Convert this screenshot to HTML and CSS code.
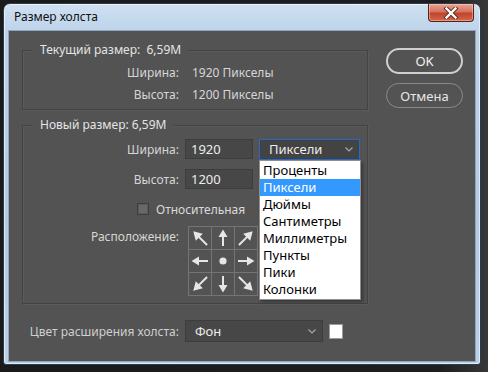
FILE: index.html
```html
<!DOCTYPE html>
<html lang="ru">
<head>
<meta charset="utf-8">
<title>Размер холста</title>
<link rel="stylesheet" href="styles.css">
</head>
<body>
<div class="window">
  <div class="titlebar">
    <span class="title">Размер холста</span>
    <div class="close">
      <svg width="16" height="12" viewBox="0 0 16 12">
        <path d="M3.5 1.5 L12.5 10.5 M12.5 1.5 L3.5 10.5" stroke="#5a2a22" stroke-width="4.2" stroke-linecap="square" fill="none"/>
        <path d="M3.5 1.5 L12.5 10.5 M12.5 1.5 L3.5 10.5" stroke="#ffffff" stroke-width="2.4" stroke-linecap="square" fill="none"/>
      </svg>
    </div>
  </div>
  <div class="client">
    <div class="main">
      <div class="left">
        <section class="group g1">
          <div class="legend">Текущий размер:&nbsp; 6,59M</div>
          <div class="row info first"><span class="lbl">Ширина:</span><span class="val">1920 Пикселы</span></div>
          <div class="row info"><span class="lbl">Высота:</span><span class="val">1200 Пикселы</span></div>
        </section>
        <section class="group g2">
          <div class="legend">Новый размер: 6,59M</div>
          <div class="row field first">
            <span class="lbl">Ширина:</span>
            <div class="input">1920</div>
            <div class="select unit focus">
              <span>Пиксели</span>
              <svg class="chev" width="8" height="5" viewBox="0 0 8 5"><path d="M0.5 0.5 L4 4 L7.5 0.5" stroke="#a8a8a8" stroke-width="1.2" fill="none"/></svg>
              <ul class="menu">
                <li>Проценты</li>
                <li class="sel">Пиксели</li>
                <li>Дюймы</li>
                <li>Сантиметры</li>
                <li>Миллиметры</li>
                <li>Пункты</li>
                <li>Пики</li>
                <li>Колонки</li>
              </ul>
            </div>
          </div>
          <div class="row field">
            <span class="lbl">Высота:</span>
            <div class="input">1200</div>
          </div>
          <div class="row check"><span class="box"></span><span class="ctext">Относительная</span></div>
          <div class="row anchor">
            <span class="lbl">Расположение:</span>
            <div class="grid">
              <div class="cell"><svg class="arrow r-315" viewBox="0 0 22 22"><path d="M11 21 V8" /><polygon points="11,1.5 6,10 16,10"/></svg></div>
              <div class="cell"><svg class="arrow" viewBox="0 0 22 22"><path d="M11 19 V8" /><polygon points="11,2.5 6.5,10 15.5,10"/></svg></div>
              <div class="cell"><svg class="arrow r-45" viewBox="0 0 22 22"><path d="M11 21 V8" /><polygon points="11,1.5 6,10 16,10"/></svg></div>
              <div class="cell"><svg class="arrow r-270" viewBox="0 0 22 22"><path d="M11 19 V8" /><polygon points="11,2.5 6.5,10 15.5,10"/></svg></div>
              <div class="cell"><svg class="dot" viewBox="0 0 22 22"><circle cx="11" cy="11" r="3.6"/></svg></div>
              <div class="cell"><svg class="arrow r-90" viewBox="0 0 22 22"><path d="M11 19 V8" /><polygon points="11,2.5 6.5,10 15.5,10"/></svg></div>
              <div class="cell"><svg class="arrow r-225" viewBox="0 0 22 22"><path d="M11 21 V8" /><polygon points="11,1.5 6,10 16,10"/></svg></div>
              <div class="cell"><svg class="arrow r-180" viewBox="0 0 22 22"><path d="M11 19 V8" /><polygon points="11,2.5 6.5,10 15.5,10"/></svg></div>
              <div class="cell"><svg class="arrow r-135" viewBox="0 0 22 22"><path d="M11 21 V8" /><polygon points="11,1.5 6,10 16,10"/></svg></div>
            </div>
          </div>
        </section>
      </div>
      <div class="buttons">
        <div class="btn ok">OK</div>
        <div class="btn cancel">Отмена</div>
      </div>
    </div>
    <div class="bottom">
      <span class="lbl">Цвет расширения холста:</span>
      <div class="select fill">
        <span>Фон</span>
        <svg class="chev" width="8" height="5" viewBox="0 0 8 5"><path d="M0.5 0.5 L4 4 L7.5 0.5" stroke="#a8a8a8" stroke-width="1.2" fill="none"/></svg>
      </div>
      <div class="swatch"></div>
    </div>
  </div>
</div>
</body>
</html>
```

FILE: styles.css
```css
* { box-sizing: border-box; }

body {
  margin: 0;
  width: 488px;
  height: 372px;
  overflow: hidden;
  background: linear-gradient(90deg, #1a1a1a 0%, #1e1e1e 90%, #383838 100%);
  font-family: "Noto Sans", "Open Sans", sans-serif;
}

.window {
  margin: 3px 0 0 3px;
  width: 478px;
  height: 362px;
  border: 1px solid #2d3c4c;
  border-radius: 7px 7px 3px 3px;
  background: linear-gradient(180deg, #cfe0f1 0%, #bcd3ea 8%, #b3cbe4 60%, #b9d0e8 100%);
  box-shadow: inset 0 0 0 1px rgba(255, 255, 255, 0.55);
  padding: 0 5px 3px 5px;
  display: flex;
  flex-direction: column;
}

.titlebar {
  height: 27px;
  display: flex;
  justify-content: space-between;
  align-items: flex-start;
}

.title {
  padding: 5px 0 0 5px;
  font-family: "Noto Sans", sans-serif;
  font-size: 12px;
  line-height: 16px;
  color: #101010;
}

.close {
  margin: 0 1px 0 0;
  width: 46px;
  height: 18px;
  border: 1px solid #5b2018;
  border-top: none;
  border-radius: 0 0 4px 4px;
  background: linear-gradient(180deg, #e9a596 0%, #d4735f 45%, #c1432c 55%, #cf6a4f 100%);
  box-shadow: inset 0 0 0 1px rgba(255, 220, 210, 0.45);
  display: flex;
  align-items: center;
  justify-content: center;
}

.client {
  flex: 1;
  background: #535353;
  box-shadow: 0 0 0 1px #8fa7c0;
  padding: 19px 12px 0 13px;
  display: flex;
  flex-direction: column;
  color: #dadada;
  font-size: 12px;
}

.main {
  display: flex;
}

.left {
  width: 346px;
  display: flex;
  flex-direction: column;
}

.group {
  border: 1px solid #434343;
  box-shadow: 1px 1px 0 #5b5b5b, inset 1px 1px 0 #5b5b5b;
  display: flex;
  flex-direction: column;
}

.legend {
  align-self: flex-start;
  margin: -9px 0 0 10px;
  padding: 0 7px;
  background: #535353;
  line-height: 16px;
  color: #e4e4e4;
  font-size: 12px;
}

.row {
  display: flex;
  align-items: center;
}

.lbl {
  width: 156px;
  flex: none;
  text-align: right;
  color: #d6d6d6;
}

.g1 { padding-bottom: 4px; }
.g1 .row.first { margin-top: 3px; }
.info { height: 22px; }
.val { margin-left: 13px; color: #d6d6d6; }

.g2 { margin-top: 15px; padding-bottom: 7px; }
.g2 .row.first { margin-top: 6px; }
.field { height: 20px; margin-bottom: 10px; }

.input {
  margin-left: 6px;
  width: 68px;
  height: 20px;
  background: #474747;
  border: 1px solid #3d3d3d;
  padding-left: 5px;
  line-height: 18px;
  font-size: 13px;
  color: #ececec;
}

.select {
  position: relative;
  height: 21px;
  background: #474747;
  border: 1px solid #3d3d3d;
  display: flex;
  align-items: center;
  justify-content: space-between;
  padding: 0 6px 0 9px;
  font-size: 13px;
  color: #ececec;
}

.unit {
  margin-left: 6px;
  width: 101px;
}

.focus {
  border-color: #2f68b5;
  background: #434343;
  box-shadow: inset 0 0 0 1px #33435a;
}

.menu {
  position: absolute;
  top: 20px;
  left: -1px;
  width: 102px;
  margin: 0;
  padding: 1px 0;
  list-style: none;
  background: #ffffff;
  border: 1px solid #8e8e8e;
  box-shadow: 2px 2px 3px rgba(0, 0, 0, 0.35);
  z-index: 2;
}

.menu li {
  height: 17px;
  line-height: 17px;
  padding-left: 3px;
  font-size: 13px;
  color: #000;
}

.menu li.sel {
  background: #3399ff;
  color: #fff;
}

.check {
  height: 20px;
  padding-left: 114px;
}

.box {
  width: 12px;
  height: 12px;
  border: 1px solid #3e3e3e;
  background: #686868;
  box-shadow: inset 0 0 0 1px #5a5a5a;
}

.ctext {
  margin-left: 7px;
  color: #dadada;
}

.anchor {
  margin-top: 7px;
  align-items: flex-start;
}

.anchor .lbl {
  margin-top: 2px;
}

.grid {
  margin-left: 9px;
  width: 70px;
  height: 70px;
  padding: 1px;
  background: #747474;
  display: grid;
  grid-template-columns: repeat(3, 22px);
  grid-template-rows: repeat(3, 22px);
  gap: 1px;
}

.cell {
  background: #535353;
}

.cell svg {
  display: block;
  width: 22px;
  height: 22px;
}

.arrow path {
  stroke: #e6e6e6;
  stroke-width: 2;
  fill: none;
}

.arrow polygon,
.dot circle {
  fill: #e6e6e6;
}

.r-45 { transform: rotate(45deg); }
.r-90 { transform: rotate(90deg); }
.r-135 { transform: rotate(135deg); }
.r-180 { transform: rotate(180deg); }
.r-225 { transform: rotate(225deg); }
.r-270 { transform: rotate(270deg); }
.r-315 { transform: rotate(315deg); }

.buttons {
  margin: -2px 0 0 18px;
  width: 77px;
  display: flex;
  flex-direction: column;
  gap: 9px;
}

.btn {
  height: 26px;
  border-radius: 13px;
  display: flex;
  align-items: center;
  justify-content: center;
  font-size: 13px;
  color: #f2f2f2;
}

.ok {
  border: 2px solid #cfcfcf;
}

.cancel {
  height: 25px;
  border: 1px solid #8a8a8a;
  color: #e6e6e6;
}

.bottom {
  margin-top: 16px;
  display: flex;
  align-items: center;
}

.bottom .lbl {
  width: 157px;
  color: #cfcfcf;
}

.fill {
  margin-left: 6px;
  width: 138px;
  height: 22px;
  padding-left: 9px;
}

.swatch {
  margin-left: 6px;
  width: 14px;
  height: 15px;
  background: #ffffff;
  border: 1px solid #9a9a9a;
}
```
